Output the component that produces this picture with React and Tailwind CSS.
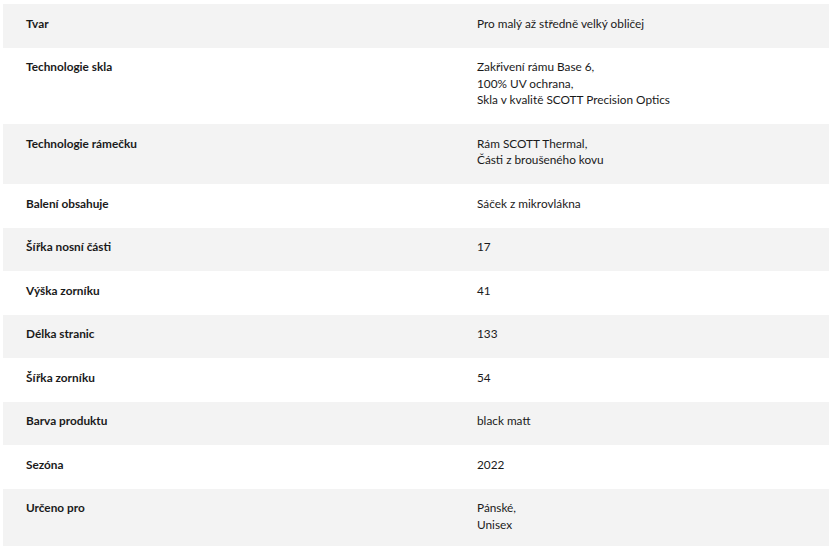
const rows = [
  { label: 'Tvar', value: ['Pro malý až středně velký obličej'] },
  {
    label: 'Technologie skla',
    value: ['Zakřivení rámu Base 6,', '100% UV ochrana,', 'Skla v kvalitě SCOTT Precision Optics']
  },
  { label: 'Technologie rámečku', value: ['Rám SCOTT Thermal,', 'Části z broušeného kovu'] },
  { label: 'Balení obsahuje', value: ['Sáček z mikrovlákna'] },
  { label: 'Šířka nosní části', value: ['17'] },
  { label: 'Výška zorníku', value: ['41'] },
  { label: 'Délka stranic', value: ['133'] },
  { label: 'Šířka zorníku', value: ['54'] },
  { label: 'Barva produktu', value: ['black matt'] },
  { label: 'Sezóna', value: ['2022'] },
  { label: 'Určeno pro', value: ['Pánské,', 'Unisex'] }
]

export default function App() {
  return (
    <div className="min-h-screen bg-white pl-[3px] pt-[4px] font-['Lato',sans-serif] text-[11.8px] leading-[16.5px] text-[#1a1a1a]">
      {rows.map(({ label, value }, i) => (
        <div
          key={label}
          className={`grid grid-cols-[451px_1fr] pt-[11.5px] pb-[15.5px] pl-[23px] ${i % 2 === 0 ? 'bg-[#f3f3f3]' : 'bg-white'}`}
        >
          <div className="font-bold">{label}</div>
          <div>
            {value.map((line) => (
              <div key={line}>{line}</div>
            ))}
          </div>
        </div>
      ))}
    </div>
  )
}
